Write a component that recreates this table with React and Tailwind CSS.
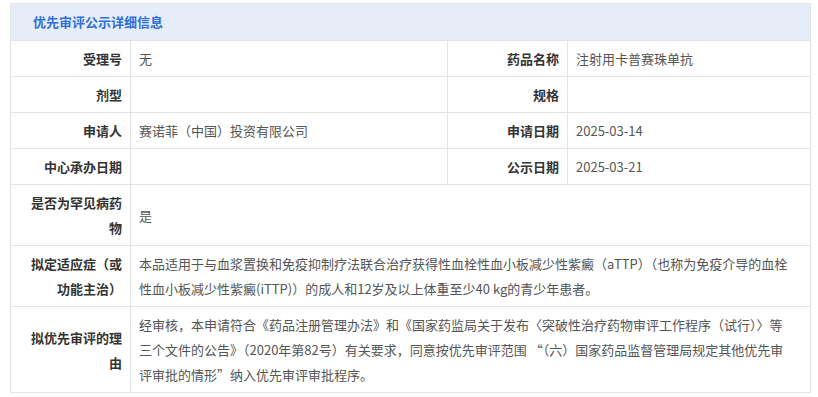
import React from 'react';

const font = { fontFamily: '"Microsoft YaHei", "Noto Sans CJK SC", "Noto Sans", sans-serif' };

function Label({ children }) {
  return (
    <th className="border border-[#e4e4e4] pl-3 pr-2 py-[5px] text-right align-middle font-bold text-[#333] leading-[25px]">
      {children}
    </th>
  );
}

function Value({ children, span }) {
  return (
    <td colSpan={span} className="border border-[#e4e4e4] px-2 py-[5px] text-left align-middle text-[#555] leading-[25px]">
      {children}
    </td>
  );
}

export default function App() {
  return (
    <div className="bg-white w-[818px] h-[397px] pt-[3px] px-[10px]" style={font}>
      <table className="w-[800px] table-fixed border-collapse text-[13px]">
        <colgroup>
          <col className="w-[120px]" />
          <col className="w-[317px]" />
          <col className="w-[120px]" />
          <col className="w-[243px]" />
        </colgroup>
        <thead>
          <tr>
            <th colSpan={4} className="h-[37px] border border-[#e4e4e4] bg-[#e6edf8] pl-[22px] text-left font-bold text-[#2f6fd8]">
              优先审评公示详细信息
            </th>
          </tr>
        </thead>
        <tbody>
          <tr>
            <Label>受理号</Label>
            <Value>无</Value>
            <Label>药品名称</Label>
            <Value>注射用卡普赛珠单抗</Value>
          </tr>
          <tr>
            <Label>剂型</Label>
            <Value></Value>
            <Label>规格</Label>
            <Value></Value>
          </tr>
          <tr>
            <Label>申请人</Label>
            <Value>赛诺菲（中国）投资有限公司</Value>
            <Label>申请日期</Label>
            <Value>2025-03-14</Value>
          </tr>
          <tr>
            <Label>中心承办日期</Label>
            <Value></Value>
            <Label>公示日期</Label>
            <Value>2025-03-21</Value>
          </tr>
          <tr>
            <Label>是否为罕见病药<br />物</Label>
            <Value span={3}>是</Value>
          </tr>
          <tr>
            <Label>拟定适应症（或<br />功能主治）</Label>
            <Value span={3}>
              本品适用于与血浆置换和免疫抑制疗法联合治疗获得性血栓性血小板减少性紫癜（aTTP）（也称为免疫介导的血栓<br />
              性血小板减少性紫癜(iTTP)）的成人和12岁及以上体重至少40 kg的青少年患者。
            </Value>
          </tr>
          <tr>
            <Label>拟优先审评的理<br />由</Label>
            <Value span={3}>
              经审核，本申请符合《药品注册管理办法》和《国家药监局关于发布〈突破性治疗药物审评工作程序（试行）〉等<br />
              三个文件的公告》（2020年第82号）有关要求，同意按优先审评范围 “（六）国家药品监督管理局规定其他优先审<br />
              评审批的情形”纳入优先审评审批程序。
            </Value>
          </tr>
        </tbody>
      </table>
    </div>
  );
}
